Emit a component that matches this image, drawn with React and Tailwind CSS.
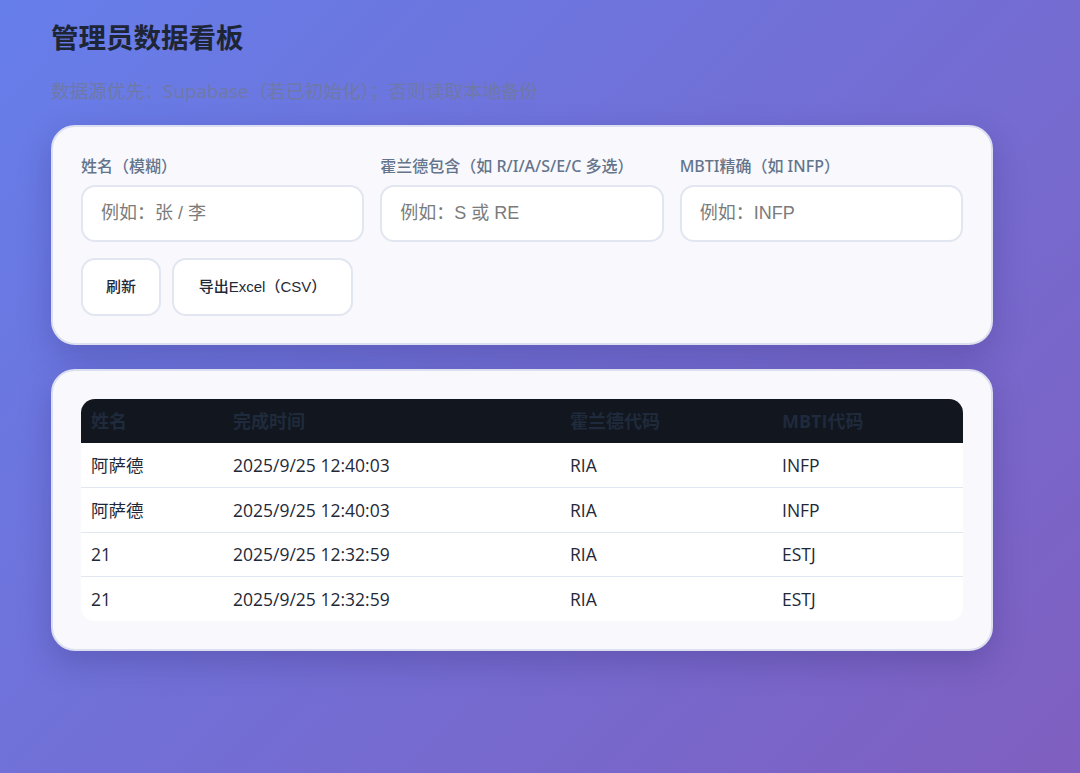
import { useState } from "react";

const rows = [
  { name: "阿萨德", time: "2025/9/25 12:40:03", holland: "RIA", mbti: "INFP" },
  { name: "阿萨德", time: "2025/9/25 12:40:03", holland: "RIA", mbti: "INFP" },
  { name: "21", time: "2025/9/25 12:32:59", holland: "RIA", mbti: "ESTJ" },
  { name: "21", time: "2025/9/25 12:32:59", holland: "RIA", mbti: "ESTJ" },
];

const sans = "font-['Noto_Sans','Noto_Sans_CJK_SC',sans-serif]";
const arial = "font-['Liberation_Sans','Noto_Sans_CJK_SC',sans-serif]";

function Field({ label, placeholder, value, onChange }) {
  return (
    <label className="flex flex-col gap-2">
      <span className={`${sans} text-[16px] leading-[22px] font-medium text-[#64748b]`}>{label}</span>
      <input
        value={value}
        onChange={(e) => onChange(e.target.value)}
        placeholder={placeholder}
        className={`${arial} h-[57px] w-full rounded-[14px] border-2 border-[#e2e6f0] bg-white px-[18px] text-[18px] text-[#1f2937] placeholder:text-[#7b7b7b] outline-none`}
      />
    </label>
  );
}

export default function App() {
  const [name, setName] = useState("");
  const [holland, setHolland] = useState("");
  const [mbti, setMbti] = useState("");

  return (
    <div className="min-h-screen bg-[linear-gradient(135deg,#667eea_0%,#7f5fc0_100%)] px-[51px] pt-5 pb-10">
      <div className="max-w-[942px]">
        <h1 className={`${sans} text-[27.5px] leading-9 font-bold text-[#1e2535]`}>管理员数据看板</h1>
        <p className={`${sans} mt-[22px] text-[18.7px] leading-[26px] text-[#6f79a8]`}>
          数据源优先：Supabase（若已初始化）；否则读取本地备份
        </p>

        <div className="mt-[21px] rounded-[24px] border-2 border-[#dcdff0] bg-[#f8f8fd] px-[28px] pt-[28px] pb-[27px] shadow-[0_12px_32px_rgba(40,30,100,0.25)]">
          <div className="grid grid-cols-3 gap-4">
            <Field label="姓名（模糊）" placeholder="例如：张 / 李" value={name} onChange={setName} />
            <Field label="霍兰德包含（如 R/I/A/S/E/C 多选）" placeholder="例如：S 或 RE" value={holland} onChange={setHolland} />
            <Field label="MBTI精确（如 INFP）" placeholder="例如：INFP" value={mbti} onChange={setMbti} />
          </div>
          <div className="mt-4 flex gap-[11px]">
            <button className={`${arial} h-[58px] w-[80px] rounded-[14px] border-2 border-[#e2e6f0] bg-white text-[15px] font-medium text-[#1f2937]`}>
              刷新
            </button>
            <button className={`${arial} h-[58px] w-[181px] rounded-[14px] border-2 border-[#e2e6f0] bg-white text-[15px] font-medium text-[#1f2937]`}>
              导出Excel（CSV）
            </button>
          </div>
        </div>

        <div className="mt-6 rounded-[24px] border-2 border-[#dcdff0] bg-[#f8f8fd] px-[28px] py-[28px] shadow-[0_12px_32px_rgba(40,30,100,0.25)]">
          <div className="overflow-hidden rounded-[14px] bg-white">
            <table className="w-full border-collapse text-left font-['Open_Sans','Noto_Sans_CJK_SC',sans-serif]">
              <thead>
                <tr className="h-[44px] bg-[#12161e] text-[18px] font-bold text-[#1f2a3c]">
                  <th className="w-[142px] px-[10px]">姓名</th>
                  <th className="w-[337px] px-[10px]">完成时间</th>
                  <th className="w-[212px] px-[10px]">霍兰德代码</th>
                  <th className="px-[10px]">MBTI代码</th>
                </tr>
              </thead>
              <tbody>
                {rows.map((r, i) => (
                  <tr key={i} className={`h-[44.5px] text-[17.5px] text-[#1f2937] ${i > 0 ? "border-t border-[#e2e6f0]" : ""}`}>
                    <td className="px-[10px]">{r.name}</td>
                    <td className="px-[10px]">{r.time}</td>
                    <td className="px-[10px]">{r.holland}</td>
                    <td className="px-[10px]">{r.mbti}</td>
                  </tr>
                ))}
              </tbody>
            </table>
          </div>
        </div>
      </div>
    </div>
  );
}
